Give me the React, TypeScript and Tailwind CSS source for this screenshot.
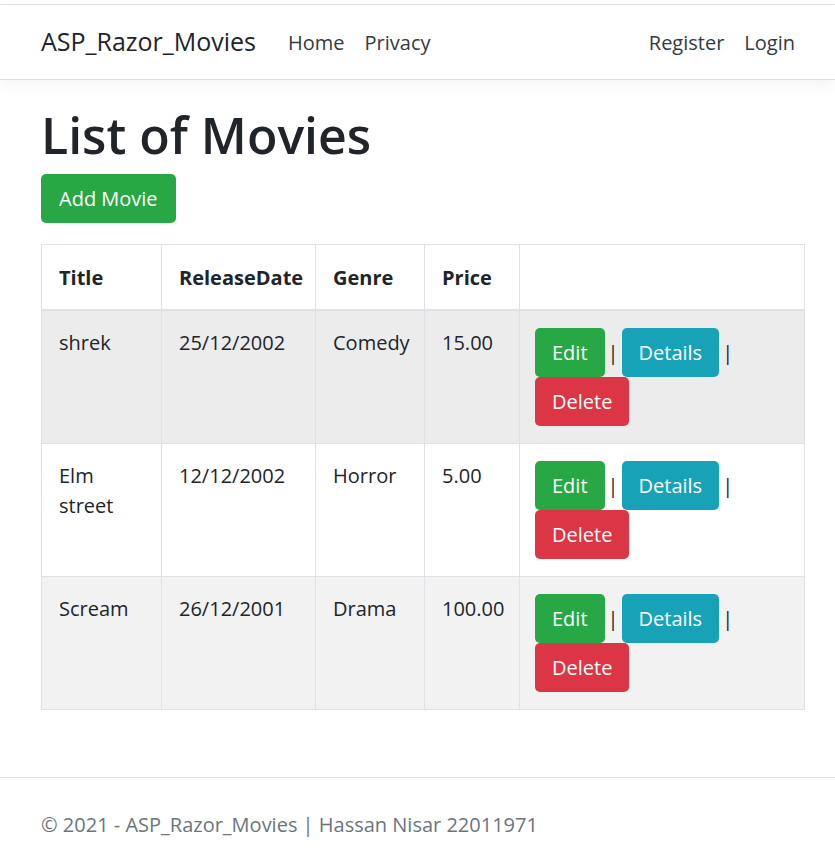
const movies = [
  { title: "shrek", date: "25/12/2002", genre: "Comedy", price: "15.00", bg: "bg-[#ececec]" },
  { title: "Elm street", date: "12/12/2002", genre: "Horror", price: "5.00", bg: "bg-white" },
  { title: "Scream", date: "26/12/2001", genre: "Drama", price: "100.00", bg: "bg-[#f2f2f2]" },
];

function Btn({ color, children }: { color: string; children: React.ReactNode }) {
  return (
    <a
      href="#"
      className={`inline-block h-[49px] px-[17px] leading-[49px] rounded-[5px] text-white text-[20px] ${color}`}
    >
      {children}
    </a>
  );
}

export default function App() {
  return (
    <div className="min-h-[848px] bg-white font-['Open_Sans',sans-serif] text-[20px] text-[#212529]">
      <header className="mt-[4px] border-t border-[#dee2e6]">
        <nav className="h-[75px] flex items-center pl-[41px] pr-[30px] border-b border-[#dee2e6] shadow-[0_5px_15px_rgba(0,0,0,0.05)]">
          <a href="#" className="text-[25px] text-[#212529] mr-[22px]">
            ASP_Razor_Movies
          </a>
          <div className="flex flex-1 items-center text-[#343a40] pt-[2px]">
            <a href="#" className="px-[10px]">Home</a>
            <a href="#" className="px-[10px]">Privacy</a>
            <div className="flex-1" />
            <a href="#" className="px-[10px]">Register</a>
            <a href="#" className="px-[10px]">Login</a>
          </div>
        </nav>
      </header>

      <main className="pl-[41px] pr-[30px] pt-[25px]">
        <h1 className="text-[50px] leading-[60px] font-semibold">List of Movies</h1>
        <div className="mt-[9px] mb-[21px]">
          <a
            href="#"
            className="inline-block h-[49px] px-[18px] leading-[49px] rounded-[5px] bg-[#28a745] text-white"
          >
            Add Movie
          </a>
        </div>

        <table className="w-full table-fixed border-collapse border border-[#dee2e6]">
          <thead>
            <tr className="bg-white">
              <th className="w-[120px] text-left align-top font-bold px-[17px] pt-[18px] pb-[16px] border border-b-2 border-[#dee2e6]">Title</th>
              <th className="w-[154px] text-left align-top font-bold px-[17px] pt-[18px] pb-[16px] border border-b-2 border-[#dee2e6]">ReleaseDate</th>
              <th className="w-[109px] text-left align-top font-bold px-[17px] pt-[18px] pb-[16px] border border-b-2 border-[#dee2e6]">Genre</th>
              <th className="w-[95px] text-left align-top font-bold px-[17px] pt-[18px] pb-[16px] border border-b-2 border-[#dee2e6]">Price</th>
              <th className="border border-b-2 border-[#dee2e6]"></th>
            </tr>
          </thead>
          <tbody>
            {movies.map((m) => (
              <tr key={m.title} className={m.bg}>
                <td className="align-top px-[17px] pt-[17px] leading-[30px] border border-[#dee2e6]">
                  {m.title.split(" ").map((w) => (
                    <div key={w}>{w}</div>
                  ))}
                </td>
                <td className="align-top px-[17px] pt-[17px] leading-[30px] border border-[#dee2e6]">{m.date}</td>
                <td className="align-top px-[17px] pt-[17px] leading-[30px] border border-[#dee2e6]">{m.genre}</td>
                <td className="align-top px-[17px] pt-[17px] leading-[30px] border border-[#dee2e6]">{m.price}</td>
                <td className="align-top px-[15px] pt-[17px] pb-[17px] border border-[#dee2e6]">
                  <div className="flex flex-wrap items-center">
                    <Btn color="bg-[#28a745]">Edit</Btn>
                    <span className="px-[3px] text-[#212529]">|</span>
                    <Btn color="bg-[#17a2b8]">Details</Btn>
                    <span className="px-[3px] text-[#212529]">|</span>
                    <Btn color="bg-[#dc3545]">Delete</Btn>
                  </div>
                </td>
              </tr>
            ))}
          </tbody>
        </table>
      </main>

      <footer className="mt-[67px] border-t border-[#dee2e6] pl-[41px] pt-[32px] text-[#6c757d]">
        © 2021 - ASP_Razor_Movies | Hassan Nisar 22011971
      </footer>
    </div>
  );
}
